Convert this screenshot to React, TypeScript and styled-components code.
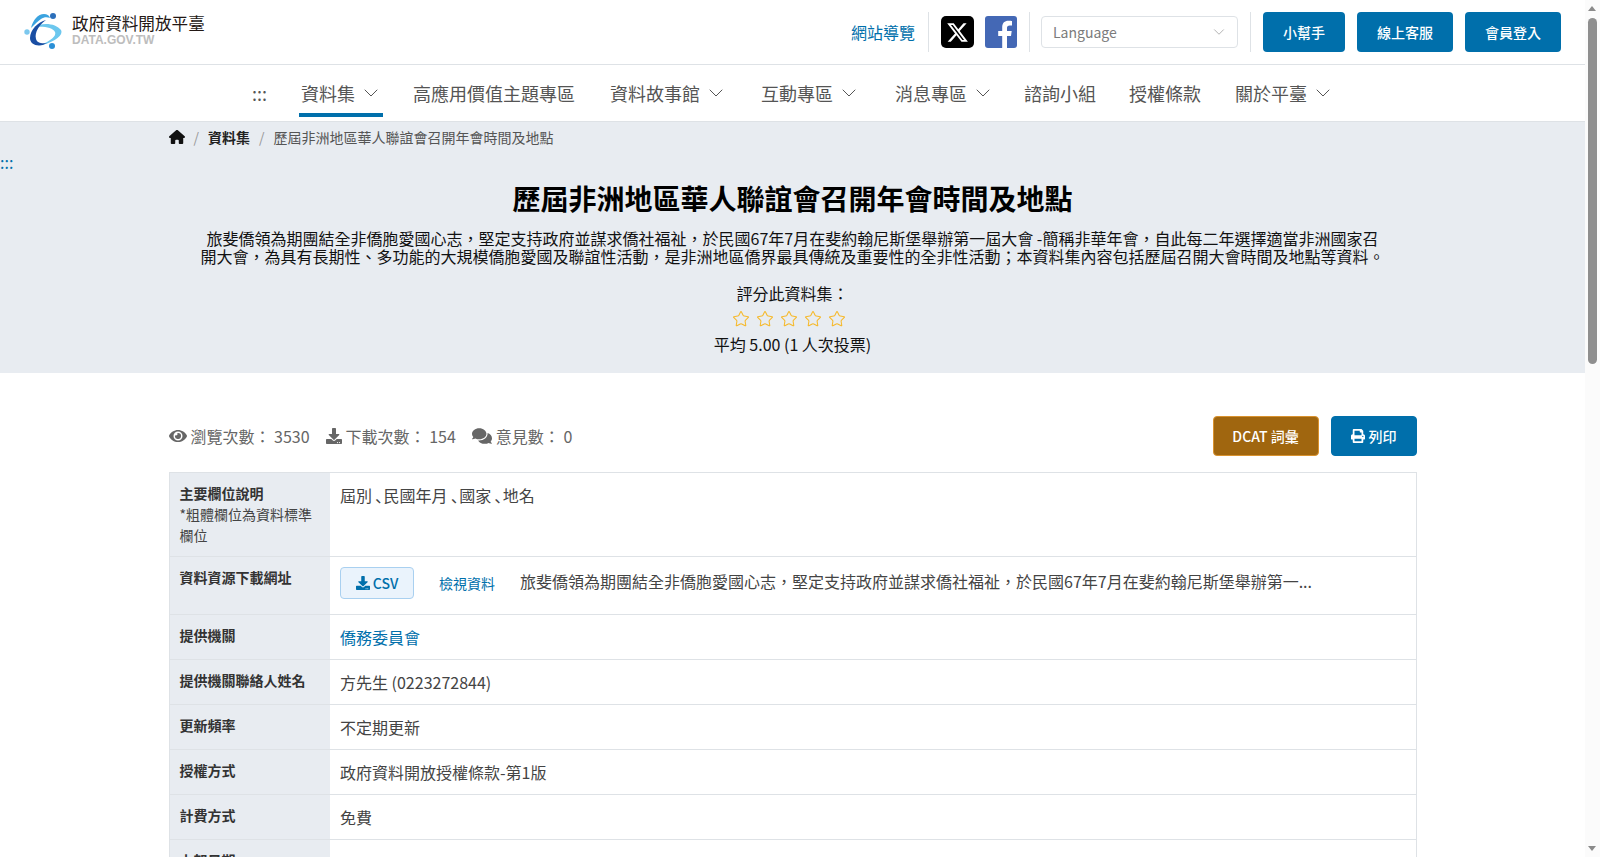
import React from "react";
import styled, { createGlobalStyle } from "styled-components";
import { FaComments, FaDownload, FaEye, FaPrint } from "react-icons/fa";
import { FaHouse, FaXTwitter } from "react-icons/fa6";
import { ChevronDown, Star } from "lucide-react";

const BLUE = "#006fab";
const BAND = "#e8ecf1";
const LINE = "#dee2e6";

const GlobalStyle = createGlobalStyle`
  body {
    margin: 0;
    padding-right: 15px;
    background: #fff;
    color: #333;
    font-family: "Noto Sans CJK TC", "Noto Sans", sans-serif;
    font-size: 16px;
  }
  a {
    text-decoration: none;
    color: inherit;
  }
`;

const Page = styled.div`
  min-height: 857px;
  overflow: hidden;
`;

/* the browser draws no scrollbar here, so the one in the picture is drawn over the page */
const ScrollTrack = styled.div`
  position: fixed;
  top: 0;
  right: 0;
  bottom: 0;
  width: 15px;
  background: #fbfbfb;
`;

const ScrollThumb = styled.div`
  position: absolute;
  top: 18px;
  left: 3px;
  width: 9px;
  height: 346px;
  border-radius: 5px;
  background: #8f8f8f;
`;

const ScrollArrow = styled.div<{ $down?: boolean }>`
  position: absolute;
  left: 3px;
  ${(p) => (p.$down ? "bottom: 6px;" : "top: 6px;")}
  width: 0;
  height: 0;
  border-left: 4.5px solid transparent;
  border-right: 4.5px solid transparent;
  ${(p) => (p.$down ? "border-top" : "border-bottom")}: 5px solid #8a8a8a;
`;

const TopBar = styled.header`
  display: flex;
  align-items: center;
  justify-content: space-between;
  height: 64px;
  padding: 0 24px;
  border-bottom: 1px solid ${LINE};
`;

const Logo = styled.a`
  display: flex;
  align-items: center;
  gap: 9px;
`;

const LogoText = styled.div`
  display: flex;
  flex-direction: column;
  margin-top: -5px;
`;

const LogoTitle = styled.span`
  font-size: 16.6px;
  line-height: 22px;
  font-weight: 400;
  color: #231815;
`;

const LogoSub = styled.span`
  font-family: "Liberation Sans", Arial, sans-serif;
  font-size: 12px;
  line-height: 13px;
  font-weight: 700;
  color: #bdbdbd;
`;

const TopActions = styled.div`
  display: flex;
  align-items: center;
`;

const SiteMap = styled.a`
  color: ${BLUE};
  font-size: 16px;
  margin-right: 13px;
`;

const Divider = styled.span`
  width: 1px;
  height: 40px;
  background: ${LINE};
`;

const Socials = styled.div`
  display: flex;
  align-items: center;
  gap: 11px;
  padding: 0 12px;
`;

const XBadge = styled.a`
  display: flex;
  align-items: center;
  justify-content: center;
  width: 33px;
  height: 32px;
  border-radius: 5px;
  background: #000;
  color: #fff;
  font-size: 23px;
`;

const FbBadge = styled.svg`
  display: block;
  width: 32px;
  height: 32px;
`;

const LangSelect = styled.div`
  display: flex;
  align-items: center;
  justify-content: space-between;
  box-sizing: border-box;
  width: 197px;
  height: 32px;
  margin: 0 12px 0 11px;
  padding: 0 9px 0 11px;
  border: 1px solid ${LINE};
  border-radius: 4px;
  color: #7b7b7b;
  font-size: 14px;
`;

const TopButtons = styled.div`
  display: flex;
  gap: 12px;
  margin-left: 12px;
`;

const TopButton = styled.a<{ $w: number }>`
  display: flex;
  align-items: center;
  justify-content: center;
  width: ${(p) => p.$w}px;
  height: 40px;
  border-radius: 4px;
  background: ${BLUE};
  color: #fff;
  font-size: 14px;
  font-weight: 500;
`;

const Nav = styled.nav`
  display: flex;
  justify-content: center;
  align-items: flex-start;
  gap: 33px;
  height: 56px;
  padding-left: 2px;
  border-bottom: 1px solid ${LINE};
`;

const NavItem = styled.a<{ $active?: boolean; $extra?: number }>`
  display: flex;
  align-items: center;
  gap: 4px;
  box-sizing: border-box;
  height: 52px;
  padding: 7px 0 0 ${(p) => (p.$active ? "2px" : "0")};
  margin-right: ${(p) => p.$extra ?? 0}px;
  color: #555;
  font-size: 18px;
  border-bottom: 4px solid ${(p) => (p.$active ? BLUE : "transparent")};
`;

const Band = styled.section`
  background: ${BAND};
  padding-bottom: 17px;
  text-align: center;
`;

const Breadcrumb = styled.ol`
  display: flex;
  align-items: center;
  box-sizing: border-box;
  width: 1248px;
  height: 30px;
  margin: 0 auto;
  padding: 0;
  list-style: none;
  font-size: 14px;
  color: #555;
`;

const Crumb = styled.li<{ $strong?: boolean }>`
  display: flex;
  align-items: center;
  font-weight: ${(p) => (p.$strong ? 700 : 400)};
  color: ${(p) => (p.$strong ? "#222" : "#555")};
`;

const CrumbSep = styled.li`
  margin: 0 9px;
  color: #999;
`;

const Accesskey = styled.a`
  display: block;
  height: 20px;
  line-height: 20px;
  text-align: left;
  color: ${BLUE};
  font-size: 16px;
`;

const Title = styled.h1`
  margin: 8px 0 13px;
  font-size: 28px;
  line-height: 36px;
  font-weight: 700;
  color: #000;
`;

const Description = styled.p`
  max-width: 1185px;
  margin: 0 auto 16px;
  line-height: 18px;
  color: #111;
`;

const RateLabel = styled.div`
  line-height: 24px;
  color: #111;
`;

const Stars = styled.div`
  display: flex;
  justify-content: center;
  align-items: center;
  gap: 6px;
  height: 22px;
  margin: 3px 0 2px;
  padding-right: 8px;
  color: #f6b92b;
`;

const Container = styled.main`
  width: 1248px;
  margin: 0 auto;
`;

const StatsRow = styled.div`
  display: flex;
  align-items: center;
  justify-content: space-between;
  height: 40px;
  margin: 43px 0 16px;
`;

const Stats = styled.div`
  display: flex;
  gap: 16px;
  color: #666;
`;

const Stat = styled.span`
  display: flex;
  align-items: center;
  gap: 4px;
  white-space: pre;
`;

const Actions = styled.div`
  display: flex;
  gap: 12px;
`;

const ActionButton = styled.a<{ $w: number; $bg: string; $border: string }>`
  display: flex;
  align-items: center;
  justify-content: center;
  gap: 4px;
  box-sizing: border-box;
  width: ${(p) => p.$w}px;
  height: 40px;
  border: 1px solid ${(p) => p.$border};
  border-radius: 4px;
  background: ${(p) => p.$bg};
  color: #fff;
  font-size: 14px;
  font-weight: 500;
`;

const InfoTable = styled.table`
  width: 100%;
  table-layout: fixed;
  border-collapse: collapse;
  border: 1px solid ${LINE};
`;

const Label = styled.th`
  width: 161px;
  box-sizing: border-box;
  padding: 10px;
  background: ${BAND};
  border-top: 1px solid ${LINE};
  border-bottom: 1px solid ${LINE};
  font-size: 14px;
  line-height: 21px;
  font-weight: 700;
  color: #333;
  text-align: left;
  vertical-align: top;
`;

const LabelNote = styled.div`
  font-weight: 400;
  color: #444;
`;

const Value = styled.td`
  padding: 10px;
  border-top: 1px solid ${LINE};
  border-bottom: 1px solid ${LINE};
  line-height: 24px;
  color: #444;
  vertical-align: top;
`;

const LinkText = styled.a`
  color: ${BLUE};
`;

const ResourceRow = styled.div`
  display: flex;
  align-items: center;
  height: 32px;
  margin-bottom: 5px;
`;

const CsvButton = styled.a`
  display: flex;
  align-items: center;
  justify-content: center;
  gap: 3px;
  box-sizing: border-box;
  width: 74px;
  height: 32px;
  border: 1px solid #a9d0f0;
  border-radius: 4px;
  background: #eaf3fc;
  color: ${BLUE};
  font-size: 14px;
  font-weight: 500;
`;

const ViewLink = styled.a`
  margin: 0 25px;
  color: ${BLUE};
  font-size: 14px;
`;

const ResourceDesc = styled.span`
  position: relative;
  top: -2px;
  color: #444;
`;

const LogoMark = () => (
  <svg width="39" height="38" viewBox="0 0 39 38">
    <path d="M10 14C18 9 32 10 37 17c3 6-8 13-23 16 10-4 19-9 17-14-2-5-12-6-21-5z" fill="#6cc7ee" />
    <path d="M7 15C9 7 14 1 20 1c3 0 5 1 6 4-3-1-6-1-9 1-3 2-6 5-10 9z" fill="#3ba3df" />
    <path d="M22 7C14 9 6 17 6 25c0 7 9 10 17 5-5 1-10 0-11-4-2-7 4-15 10-19z" fill="#1a4ea3" />
    <circle cx="29" cy="3" r="3" fill="#2c6fba" />
    <circle cx="3" cy="19" r="2.7" fill="#7cc8ee" />
    <circle cx="28" cy="33" r="3" fill="#2a8fd6" />
  </svg>
);

const Chevron = () => <ChevronDown size={24} strokeWidth={1} />;

const App = () => {
  return (
    <Page>
      <GlobalStyle />
      <TopBar>
        <Logo href="#">
          <LogoMark />
          <LogoText>
            <LogoTitle>政府資料開放平臺</LogoTitle>
            <LogoSub>DATA.GOV.TW</LogoSub>
          </LogoText>
        </Logo>
        <TopActions>
          <SiteMap href="#">網站導覽</SiteMap>
          <Divider />
          <Socials>
            <XBadge href="#">
              <FaXTwitter />
            </XBadge>
            <FbBadge viewBox="0 0 32 32">
              <rect width="32" height="32" rx="3" fill="#4468b5" />
              <path
                d="M22 32V20h4l.7-5H22v-3c0-1.5.7-2.6 2.8-2.6H27V5c-.6-.1-2-.3-3.6-.3-3.7 0-6.2 2.2-6.2 6.4V15h-4v5h4v12z"
                fill="#fff"
              />
            </FbBadge>
          </Socials>
          <Divider />
          <LangSelect>
            Language
            <ChevronDown size={18} strokeWidth={1} color="#999" />
          </LangSelect>
          <Divider />
          <TopButtons>
            <TopButton href="#" $w={82}>小幫手</TopButton>
            <TopButton href="#" $w={96}>線上客服</TopButton>
            <TopButton href="#" $w={96}>會員登入</TopButton>
          </TopButtons>
        </TopActions>
      </TopBar>

      <Nav>
        <NavItem href="#" $extra={-1}>:::</NavItem>
        <NavItem href="#" $active $extra={-3}>
          資料集 <Chevron />
        </NavItem>
        <NavItem href="#" $extra={2}>高應用價值主題專區</NavItem>
        <NavItem href="#">
          資料故事館 <Chevron />
        </NavItem>
        <NavItem href="#" $extra={1}>
          互動專區 <Chevron />
        </NavItem>
        <NavItem href="#" $extra={-4}>
          消息專區 <Chevron />
        </NavItem>
        <NavItem href="#">諮詢小組</NavItem>
        <NavItem href="#" $extra={1}>授權條款</NavItem>
        <NavItem href="#">
          關於平臺 <Chevron />
        </NavItem>
      </Nav>

      <Band>
        <Breadcrumb>
          <Crumb $strong>
            <FaHouse size={16} color="#111" />
          </Crumb>
          <CrumbSep>/</CrumbSep>
          <Crumb $strong>資料集</Crumb>
          <CrumbSep>/</CrumbSep>
          <Crumb>歷屆非洲地區華人聯誼會召開年會時間及地點</Crumb>
        </Breadcrumb>
        <Accesskey href="#">:::</Accesskey>
        <Title>歷屆非洲地區華人聯誼會召開年會時間及地點</Title>
        <Description>
          旅斐僑領為期團結全非僑胞愛國心志，堅定支持政府並謀求僑社福祉，於民國67年7月在斐約翰尼斯堡舉辦第一屆大會
          -簡稱非華年會，自此每二年選擇適當非洲國家召開大會，為具有長期性、多功能的大規模僑胞愛國及聯誼性活動，是非洲地區僑界最具傳統及重要性的全非性活動；本資料集內容包括歷屆召開大會時間及地點等資料。
        </Description>
        <RateLabel>評分此資料集：</RateLabel>
        <Stars>
          {[1, 2, 3, 4, 5].map((n) => (
            <Star key={n} size={18} strokeWidth={1.4} />
          ))}
        </Stars>
        <RateLabel>平均 5.00 (1 人次投票)</RateLabel>
      </Band>

      <Container>
        <StatsRow>
          <Stats>
            <Stat>
              <FaEye size={18} />瀏覽次數： 3530
            </Stat>
            <Stat>
              <FaDownload size={16} />下載次數： 154
            </Stat>
            <Stat>
              <FaComments size={20} />意見數： 0
            </Stat>
          </Stats>
          <Actions>
            <ActionButton href="#" $w={106} $bg="#a0660f" $border="#d9922e">DCAT 詞彙</ActionButton>
            <ActionButton href="#" $w={86} $bg={BLUE} $border={BLUE}>
              <FaPrint size={14} />列印
            </ActionButton>
          </Actions>
        </StatsRow>

        <InfoTable>
          <tbody>
            <tr>
              <Label>
                主要欄位說明
                <LabelNote>*粗體欄位為資料標準欄位</LabelNote>
              </Label>
              <Value>屆別 ､民國年月 ､國家 ､地名</Value>
            </tr>
            <tr>
              <Label>資料資源下載網址</Label>
              <Value>
                <ResourceRow>
                  <CsvButton href="#">
                    <FaDownload size={14} />CSV
                  </CsvButton>
                  <ViewLink href="#">檢視資料</ViewLink>
                  <ResourceDesc>
                    旅斐僑領為期團結全非僑胞愛國心志，堅定支持政府並謀求僑社福祉，於民國67年7月在斐約翰尼斯堡舉辦第一...
                  </ResourceDesc>
                </ResourceRow>
              </Value>
            </tr>
            <tr>
              <Label>提供機關</Label>
              <Value>
                <LinkText href="#">僑務委員會</LinkText>
              </Value>
            </tr>
            <tr>
              <Label>提供機關聯絡人姓名</Label>
              <Value>方先生 (0223272844)</Value>
            </tr>
            <tr>
              <Label>更新頻率</Label>
              <Value>不定期更新</Value>
            </tr>
            <tr>
              <Label>授權方式</Label>
              <Value>政府資料開放授權條款-第1版</Value>
            </tr>
            <tr>
              <Label>計費方式</Label>
              <Value>免費</Value>
            </tr>
            <tr>
              <Label>上架日期</Label>
              <Value />
            </tr>
          </tbody>
        </InfoTable>
      </Container>

      <ScrollTrack>
        <ScrollArrow />
        <ScrollThumb />
        <ScrollArrow $down />
      </ScrollTrack>
    </Page>
  );
};

export default App;
